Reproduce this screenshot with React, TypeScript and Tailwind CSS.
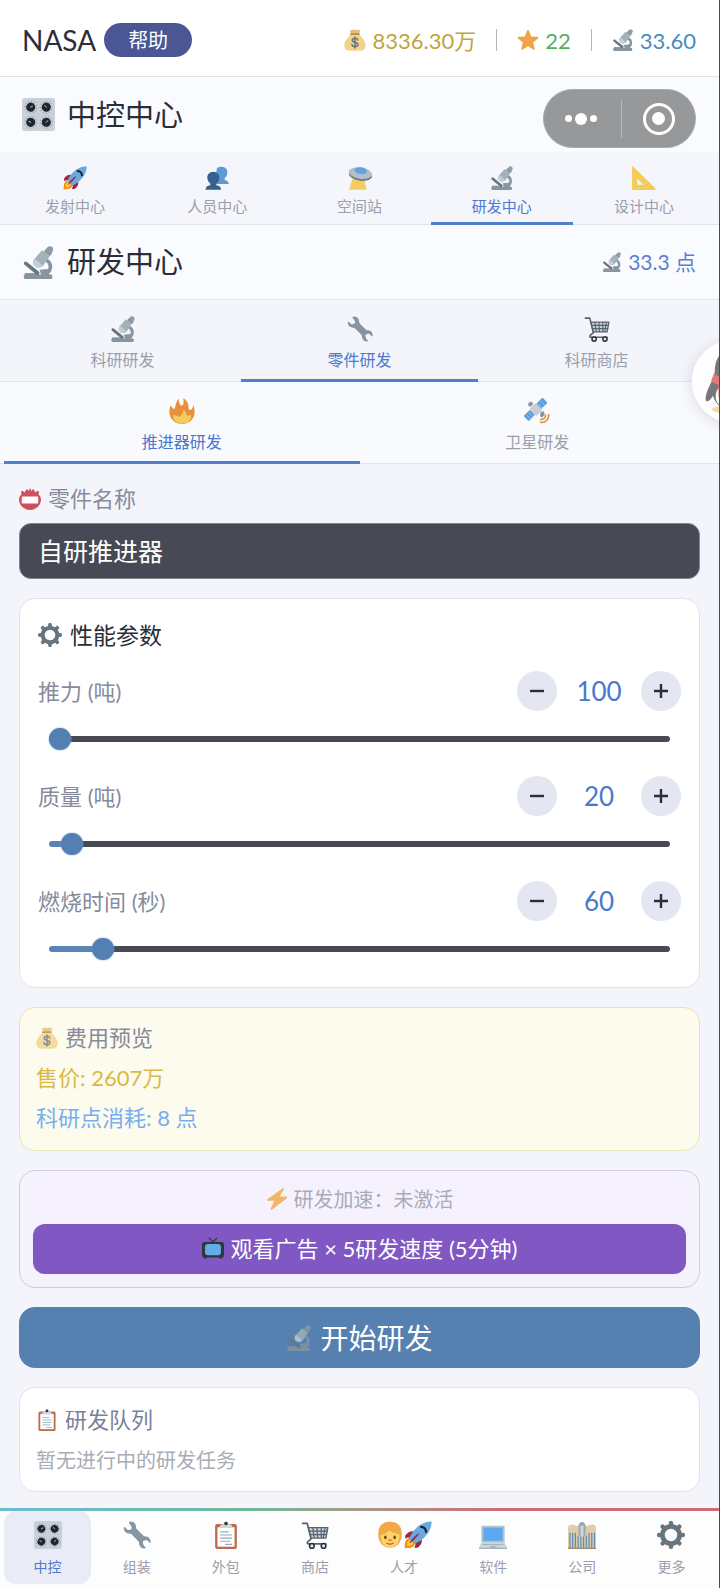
import { useState } from 'react';
import type { CSSProperties, ReactNode } from 'react';
import clsx from 'clsx';

type IconProps = { className?: string };

const Svg = ({ className, children }: { className?: string; children: ReactNode }) => (
  <svg viewBox="0 0 36 36" className={clsx('shrink-0', className)} aria-hidden="true">
    {children}
  </svg>
);

const MoneyBag = ({ className }: IconProps) => (
  <Svg className={className}>
    <path fill="#f3d38a" d="M11 9h14c3 4 10.500 10 10.500 18 0 6-4 8.500-9 8.500h-17c-5 0-9-2.500-9-8.500C.5 19 8 13 11 9z" />
    <path fill="#e2bd74" d="M9 1l3.500 1.500L15.500.5 18 2.500l2.500-2 3 2L27 1l-2.500 7h-13z" />
    <rect x="10" y="7" width="16" height="3" rx="1.500" fill="#b98a4c" />
    <path fill="none" stroke="#67757f" strokeWidth="2.400" strokeLinecap="round" d="M22.500 18c-.5-2-2-2.800-4.500-2.800-2.800 0-4.500 1.300-4.500 3.300 0 4.800 9.300 2.200 9.300 7 0 2-1.900 3.400-4.800 3.400-2.700 0-4.600-1.200-5-3.400M18 13v18" />
  </Svg>
);

const Star = ({ className }: IconProps) => (
  <Svg className={className}>
    <path fill="#f0a449" d="M18 1.500c.8 0 1.400.5 1.700 1.200l3.600 9.400 10 .5c1.700.1 2.300 2 1 3.100l-7.900 6.300 2.700 9.800c.4 1.600-1.200 2.800-2.600 1.900L18 28.300l-8.500 5.400c-1.400.9-3-.3-2.600-1.900l2.700-9.800-7.900-6.300c-1.300-1.100-.7-3 1-3.100l10-.5 3.600-9.400c.3-.7.900-1.200 1.700-1.200z" />
  </Svg>
);

const Microscope = ({ className }: IconProps) => (
  <Svg className={className}>
    <path fill="none" stroke="#8795a0" strokeWidth="4" d="M26 15c7 4 6.500 12-1 16.500" />
    <path fill="#8795a0" d="M19 26l9-1 2 7h-9z" />
    <rect x="2" y="31" width="31" height="5" rx="1.500" fill="#8795a0" />
    <path fill="#8795a0" d="M3 29.500h15V32H3z" />
    <path stroke="#66757f" strokeWidth="4" strokeLinecap="round" d="M4 19l13 10.500" />
    <path fill="#a3b1bb" d="M22 4.500l8.500 6L23 21.500c-3 3-7.500 2.500-9.500 0-2-2.300-2-6 .5-8z" />
    <path fill="#c3ced6" d="M14 13.500l8.500 8c-3 2.500-7 2-9 0-2-2.200-1.800-5.800.5-8z" />
    <path fill="#8795a0" d="M26.500 2.500L33 7.500l-2.500 3.500-6.500-5z" />
    <circle cx="30.500" cy="3.800" r="3.500" fill="#909da8" />
  </Svg>
);

const Knob = ({ x, y, turn }: { x: number; y: number; turn: number }) => (
  <g transform={`rotate(${turn} ${x} ${y})`}>
    <circle cx={x} cy={y} r="6.500" fill="none" stroke="#8795a0" strokeWidth="1.200" strokeDasharray="1 2.400" />
    <circle cx={x} cy={y} r="5" fill="#20262d" />
    <path stroke="#ccd6dd" strokeWidth="1" strokeLinecap="round" d={`M${x} ${y}v-2.200`} />
  </g>
);

const ControlKnobs = ({ className }: IconProps) => (
  <Svg className={className}>
    <rect width="36" height="36" rx="3" fill="#c9d0d8" />
    <Knob x={9.5} y={10} turn={60} />
    <Knob x={26.5} y={10} turn={-40} />
    <Knob x={9.5} y={26.500} turn={-60} />
    <Knob x={26.5} y={26.500} turn={40} />
  </Svg>
);

const Rocket = ({ className }: IconProps) => (
  <Svg className={className}>
    <path fill="#a0263e" d="M2 18c4-5 8-6 13-4l-6 8c-3-1-5-1-7 1-.6-2-.6-3.500 0-5zM18 34c5-4 6-8 4-13l-8 6c1 3 1 5-1 7 2 .6 3.500.6 5 0z" />
    <path fill="#f4900c" d="M1 35c0-8 1-12 6-13 4 0 7 3 7 7-1 5-5 6-13 6z" />
    <path fill="#ffcc4d" d="M4 32c0-5 1-7 4-7.500 2 0 3.500 1.500 3.500 3.500C11 31 9 32 4 32z" />
    <path fill="#6aa9e0" d="M35.500.5c0 9-4.500 17-12 23-3 2.500-7 4.800-10 5.500L7 22.500c.7-3 3-7 5.500-10C18.500 5 26.500.5 35.500.5z" />
    <path fill="#a0263e" d="M7 29c1-4 7-11 13-14-3 6-10 12-13 14z" />
    <path fill="none" stroke="#20262d" strokeWidth="3" strokeLinecap="round" d="M22 7.500c3.500.2 6 2.700 6.500 6.500" />
  </Svg>
);

const People = ({ className }: IconProps) => (
  <Svg className={className}>
    <path fill="#5b9bd8" d="M25 1c6 0 9 4.500 8.500 9.500-.4 4-2 6-4 7.500v3c4 .5 6 2.500 6 6H14l4-24c2-1.400 4.500-2 7-2z" />
    <path fill="#34618e" d="M12.500 8.500c6 0 9.500 4.500 9 9.500-.4 4-2 6.500-4.500 8v3c4.500.5 7 2.500 7 6.500H1c0-4 2.500-6 7-6.500v-3c-2.500-1.500-4.100-4-4.500-8-.5-5 3-9.500 9-9.500z" />
  </Svg>
);

const Ufo = ({ className }: IconProps) => (
  <Svg className={className}>
    <path fill="#f3cc62" d="M7 18h17l4 17.500H1.500z" />
    <ellipse cx="18.500" cy="13.500" rx="17.500" ry="8.500" fill="#6f7f8c" transform="rotate(8 18 14)" />
    <ellipse cx="18.500" cy="10.500" rx="17.500" ry="8.500" fill="#b3bfc9" transform="rotate(8 18 11)" />
    <ellipse cx="19" cy="7" rx="9.500" ry="5" fill="#5fa4e2" transform="rotate(8 19 8)" />
  </Svg>
);

const SetSquare = ({ className }: IconProps) => (
  <Svg className={className}>
    <path fill="#f3cc5c" fillRule="evenodd" d="M0 1.500C0 .3 1 0 2 1l33 32.500c1 1 .5 2.500-1 2.500H2c-1.200 0-2-.8-2-2zM8 19v9h9z" />
    <path fill="none" stroke="#d9ab3e" strokeWidth="1" d="M5 6l-1.500 1.500M9 10l-1.500 1.500M25 26l-1.500 1.500M29 30l-1.500 1.500" />
  </Svg>
);

const Wrench = ({ className }: IconProps) => (
  <Svg className={className}>
    <path
      fill="#8795a0"
      d="M9.500.8c3.800 0 6.700 2 7.200 6.200.2 1.800.3 2.800 1.500 4l7.500 7.400c1.200 1.200 2.200 1.300 3.800 1.500 4 .5 6.300 3.500 6 7.300-.1 1.200-.8 1.400-1.600.6l-2.500-2.600c-.8-.8-1.700-1-2.600-.6l-2.300 1c-1 .5-1.400 1.200-1 2.300l.8 2.600c.2.8.5 1.200 1.200 1.900l1.200 1.200c.8.8.5 1.600-.6 1.700-4 .3-6.900-2-7.300-6.200-.2-1.700-.4-2.500-1.600-3.700l-7.600-7.600c-1.200-1.200-2-1.400-3.800-1.600C3.600 15.700.9 12.600 1 9c.1-1.200.9-1.500 1.700-.7l2.700 2.600c.7.7 1.500 1 2.400.6l2.500-1c.9-.4 1.300-1.100.9-2.100l-1-2.400c-.2-.7-.4-1-1-1.600L8 3.100C7.200 2.200 8 .9 9.500.8z"
    />
  </Svg>
);

const Cart = ({ className }: IconProps) => (
  <Svg className={className}>
    <path fill="none" stroke="#59636d" strokeWidth="2.200" strokeLinecap="round" strokeLinejoin="round" d="M2 3h6l5 20-4 3.500c-1.500 1.500-1 3 1 3h22" />
    <path fill="#c8d0d8" stroke="#59636d" strokeWidth="1.800" strokeLinejoin="round" d="M9.500 8.500h25L32 22H13z" />
    <path fill="none" stroke="#59636d" strokeWidth="1.500" d="M10 13h24M11.500 17.500h22M15 8.500L17 22M20.500 8.500L21.500 22M26 8.500V22M31 8.500L28.500 22" />
    <circle cx="14" cy="32" r="3" fill="#e1e8ed" stroke="#292f33" strokeWidth="2" />
    <circle cx="29" cy="32" r="3" fill="#e1e8ed" stroke="#292f33" strokeWidth="2" />
  </Svg>
);

const Fire = ({ className }: IconProps) => (
  <Svg className={className}>
    <path
      fill="#e8913a"
      d="M18 36C8 36 .5 28.500.5 19c0-4 1-7 2.500-9 .8 3 2.500 5.500 4.500 5C9.500 13 8.500 6 13.500 1c0 4 1 6 2 8.500 1.500 2 4 1 4.500-2C20.300 5 20.500 3 19.500.3 25 3 27.500 8 27 13c.5 3 1.500 4 3 3.500 2-1 3-3 3.500-6.500 1.300 2.500 2 5.500 2 9C35.500 28.500 28 36 18 36z"
    />
    <path
      fill="#f5cb5e"
      d="M29 23c-1.400 2.500-4.500 2-4.800-.5-.3-3-1.500-4.500-4.500-6 .5 4-2.500 5.500-3.700 8-1 2-3.400 1.700-4-.5-1 1.500-3.200 1-4.500-2C6 24 5.500 26 6 28.500 8 33 12.500 35.500 18 35.500S28.500 33 30.500 28c.4-2 0-3.500-1.500-5z"
    />
  </Svg>
);

const Satellite = ({ className }: IconProps) => (
  <Svg className={className}>
    <path stroke="#99aab5" strokeWidth="2.500" d="M8 27L30 6" />
    <rect x="18" y="2.500" width="13" height="10" rx="2" fill="#5b9fe0" transform="rotate(-45 24.500 7.500)" />
    <rect x="1" y="19" width="13" height="10" rx="2" fill="#5b9fe0" transform="rotate(-45 7.500 24)" />
    <path stroke="#bcd8f2" strokeWidth=".8" d="M20 8l6.500 6.500M22.500 4l8 8M3 23l7 7M6.500 20l7.500 7.500" />
    <rect x="9.500" y="9.500" width="14" height="13" rx="3" fill="#c5ced6" transform="rotate(45 16.500 16)" />
    <path fill="#8795a0" d="M6 7l4-2 3 3-4 4-3-1zM23 20l4-2 2 5-4 4-3-2z" />
    <path fill="none" stroke="#d99b4a" strokeWidth="2.400" strokeLinecap="round" d="M23 33.500c6 1.500 12-4 11-10.500M23.500 29.500c3.500.5 6.500-2 6.500-5.500" />
  </Svg>
);

const NameBadge = ({ className }: IconProps) => (
  <Svg className={className}>
    <path fill="#cf4f5e" d="M32 10.500c.6-2.300.7-5 0-6-2 .2-4 1.500-5.500 3C26 5 24.500 2.500 23 2c-1.500.5-2.300 2-2.800 3.500C19.600 3.500 19 1.500 18 .5c-1 1-1.600 3-2.200 5C15.300 4 14.500 2.500 13 2c-1.500.5-3 3-3.500 5.500C8 6 6 4.700 4 4.500c-.7 1-.6 3.700 0 6-2.500 2-4 5-4 8.500C0 28 8 36 18 36s18-8 18-17c0-3.500-1.500-6.500-4-8.500z" />
    <rect x="4.500" y="14" width="27" height="11.500" rx="1.500" fill="#fff" />
  </Svg>
);

const gearAngles = [0, 45, 90, 135, 180, 225, 270, 315];

const Gear = ({ className }: IconProps) => (
  <Svg className={className}>
    <circle cx="18" cy="18" r="11" fill="none" stroke="#66757f" strokeWidth="6" />
    {gearAngles.map((a) => (
      <path key={a} fill="#66757f" transform={`rotate(${a} 18 18)`} d="M14.800 7l.7-5.500C15.700.5 16.500 0 18 0s2.300.5 2.500 1.500l.7 5.500z" />
    ))}
  </Svg>
);

const Bolt = ({ className }: IconProps) => (
  <Svg className={className}>
    <path fill="#eeb765" d="M34.500 15c-.2-.6-.7-1-1.300-1H22.500L29.400 2.200c.6-1.300-.8-2.600-2-1.800L2.300 18.500C1.200 19.500 1.800 21 3 21h10.500L7.600 33.800c-.6 1.300.8 2.600 2 1.800l24.500-19c.4-.4.600-1 .4-1.600z" />
  </Svg>
);

const Tv = ({ className }: IconProps) => (
  <Svg className={className}>
    <path fill="none" stroke="#31373d" strokeWidth="2" strokeLinecap="round" d="M12 2l6 6 6-6" />
    <path fill="#31373d" d="M4 8c-2.500 0-4 1.500-4 4v17c0 2.500 1 4 2.500 4.500L3 35h4l1-1.500h20L29 35h4l.5-1.500C35 33 36 31.500 36 29V12c0-2.500-1.500-4-4-4z" />
    <rect x="5" y="11.500" width="26" height="18.500" rx="5" fill="#63aceb" />
  </Svg>
);

const Clipboard = ({ className }: IconProps) => (
  <Svg className={className}>
    <rect x="4" y="4" width="28" height="32" rx="2.500" fill="#c1694f" />
    <path fill="#fff" d="M7 8h22v25H7z" />
    <path fill="#ccd6dd" d="M10 9V7c0-2 3-2.500 4.500-3C15 1.800 16.300.5 18 .5S21 1.800 21.500 4C23 4.500 26 5 26 7v2z" />
    <circle cx="18" cy="3.200" r="2.300" fill="#31373d" />
    <path stroke="#8fabbb" strokeWidth="1.400" d="M10.500 14h11M10.500 18h15M10.500 22h15M10.500 26h13M17 30h9" />
  </Svg>
);

const Person = ({ className }: IconProps) => (
  <Svg className={className}>
    <path fill="#f0a944" d="M18 1C7 1 2 8 3 19c.5 9 7 15.500 15 15.500S32.500 28 33 19C34 8 29 1 18 1z" />
    <path fill="#fcd36b" d="M6 18c5-1 9-3 11-6 4 3 8 4 13 5v3c0 8-5 14-12 14S6 28 6 20z" />
    <ellipse cx="12" cy="21" rx="1.600" ry="2.400" fill="#664500" />
    <ellipse cx="24" cy="21" rx="1.600" ry="2.400" fill="#664500" />
    <path fill="none" stroke="#b5552f" strokeWidth="1.600" strokeLinecap="round" d="M16.500 24.500h3M14 28.500c2.500 1.500 5.500 1.500 8 0" />
  </Svg>
);

const Laptop = ({ className }: IconProps) => (
  <Svg className={className}>
    <rect x="3" y="6" width="30" height="22" rx="1.500" fill="#b6c2cc" />
    <path fill="#5da9f0" d="M5.500 8.500h25v17h-25z" />
    <path fill="#ccd6dd" d="M3 28h30l3 5.500v1c0 .8-.7 1.500-1.500 1.500h-33C.7 36 0 35.300 0 34.500v-1z" />
    <path fill="#a5b1bc" d="M5 29.500h26l1 1.500H4zM14 32h8l.5 2h-9zM0 34.500h36c0 .9-.6 1.500-1.200 1.500H1.200C.6 36 0 35.400 0 34.500z" />
  </Svg>
);

const Building = ({ className }: IconProps) => (
  <Svg className={className}>
    <path fill="#e0cdaa" d="M0 9c0-3 2-4.500 5-4.500S10 6 11 6h14c1 0 3-1.500 6-1.500s5 1.500 5 4.500v27H0z" />
    <path fill="#99a6b1" d="M13.500 7c0-7.500 9-7.500 9 0v12h-9z" />
    <path fill="#ccd6dd" d="M16 6h4v13h-4z" />
    <path stroke="#5b8fb5" strokeWidth="1.600" d="M2.500 15v19M6 15v19M9.500 15v19M13 19v15M16.500 20v14M20 20v14M23.500 19v15M27 15v19M30.500 15v19M34 15v19" />
    <path stroke="#8b7c69" strokeWidth="1.500" d="M0 35h36" />
  </Svg>
);

const Penguin = ({ className }: IconProps) => (
  <svg viewBox="0 0 64 72" className={className} aria-hidden="true">
    <ellipse cx="32" cy="66" rx="24" ry="5" fill="#f3dba6" />
    <path fill="#77777c" d="M32 0C18 0 11 10 11 24c0 9-9 18-10 30 0 5 4 4 8-3 3 10 12 17 23 17s20-7 23-17c4 7 8 8 8 3C62 42 53 33 53 24 53 10 46 0 32 0z" />
    <path fill="#fff" d="M32 36c-13 0-20 7-20 16s9 14 20 14 20-5 20-14-7-16-20-16z" />
    <ellipse cx="25" cy="15" rx="5" ry="7" fill="#fff" />
    <ellipse cx="39" cy="15" rx="5" ry="7" fill="#fff" />
    <ellipse cx="32" cy="26" rx="14" ry="4" fill="#efb04c" />
    <path fill="#e4777b" d="M10 27c12 8 32 8 44 0l3 8c-9 6-22 8-33 7v10h-9V39c-3-1-6-2-8-4z" />
  </svg>
);

const mainTabs = [
  { label: '发射中心', Icon: Rocket },
  { label: '人员中心', Icon: People },
  { label: '空间站', Icon: Ufo },
  { label: '研发中心', Icon: Microscope },
  { label: '设计中心', Icon: SetSquare },
];

const researchTabs = [
  { label: '科研研发', Icon: Microscope },
  { label: '零件研发', Icon: Wrench },
  { label: '科研商店', Icon: Cart },
];

const partTabs = [
  { label: '推进器研发', Icon: Fire },
  { label: '卫星研发', Icon: Satellite },
];

const bottomTabs = [
  { label: '中控', icons: [ControlKnobs] },
  { label: '组装', icons: [Wrench] },
  { label: '外包', icons: [Clipboard] },
  { label: '商店', icons: [Cart] },
  { label: '人才', icons: [Person, Rocket] },
  { label: '软件', icons: [Laptop] },
  { label: '公司', icons: [Building] },
  { label: '更多', icons: [Gear] },
];

type Tab = { label: string; Icon: (props: IconProps) => ReactNode };

const TabBar = ({ tabs, initial, compact, className }: { tabs: Tab[]; initial: number; compact?: boolean; className: string }) => {
  const [active, setActive] = useState(initial);

  return (
    <nav className={clsx('flex px-1 shadow-[inset_0_-1px_0_#e0e4ee]', className)}>
      {tabs.map(({ label, Icon }, i) => (
        <button
          key={label}
          type="button"
          onClick={() => setActive(i)}
          className={clsx(
            'flex flex-1 flex-col items-center border-b-[3px]',
            compact ? 'gap-1.5 pt-3.5 pb-1.5 text-[15px]/5' : 'gap-2 pt-4 pb-[9px] text-[16px]/5',
            i === active ? 'border-[#4f7fcf] text-[#4a78cc]' : 'border-transparent text-[#9b9eab]'
          )}
        >
          <Icon className={compact ? 'size-6' : 'size-[26px]'} />
          {label}
        </button>
      ))}
    </nav>
  );
};

type ParamProps = { id: string; label: string; min: number; max: number; initial: number };

const ParamSlider = ({ id, label, min, max, initial }: ParamProps) => {
  const [value, setValue] = useState(initial);
  const ratio = (value - min) / (max - min);
  const fill = { '--fill': `${ratio * 100}%` } as CSSProperties;
  const stepClass =
    'flex size-10 items-center justify-center rounded-full bg-[#e4e6f2] text-[#2b2d38]';

  return (
    <div className="flex flex-col gap-[17px]">
      <div className="flex items-center justify-between">
        <label htmlFor={id} className="text-[22px] text-[#868b9c]">{label}</label>
        <div className="flex items-center">
          <button type="button" aria-label={`减少${label}`} className={stepClass} onClick={() => setValue(Math.max(min, value - 1))}>
            <svg viewBox="0 0 14 14" className="size-3.5" stroke="currentColor" strokeWidth="2.400"><path d="M0 7h14" /></svg>
          </button>
          <output htmlFor={id} className="w-[84px] text-center text-[26px] leading-10 text-[#4a78cc]">{value}</output>
          <button type="button" aria-label={`增加${label}`} className={stepClass} onClick={() => setValue(Math.min(max, value + 1))}>
            <svg viewBox="0 0 14 14" className="size-3.5" stroke="currentColor" strokeWidth="2.400"><path d="M0 7h14M7 0v14" /></svg>
          </button>
        </div>
      </div>
      <div className="flex px-[11px]">
        <input
          id={id}
          type="range"
          min={min}
          max={max}
          value={value}
          onChange={(e) => setValue(Number(e.target.value))}
          style={fill}
          className="h-[22px] w-full appearance-none bg-transparent [&::-webkit-slider-runnable-track]:h-1.5 [&::-webkit-slider-runnable-track]:rounded-full [&::-webkit-slider-runnable-track]:bg-[linear-gradient(to_right,#5a84b6_var(--fill),#474955_var(--fill))] [&::-webkit-slider-thumb]:-mt-2 [&::-webkit-slider-thumb]:size-[22px] [&::-webkit-slider-thumb]:appearance-none [&::-webkit-slider-thumb]:rounded-full [&::-webkit-slider-thumb]:bg-[#547fb2] [&::-webkit-slider-thumb]:shadow-[0_0_2px_#7ea3cf]"
        />
      </div>
    </div>
  );
};

const App = () => {
  const [partName, setPartName] = useState('自研推进器');
  const [activeNav, setActiveNav] = useState(0);

  return (
    <div className="relative flex min-h-screen flex-col overflow-hidden border-r border-[#4a4a55] bg-[#f4f5fa] font-['Lato','Noto_Sans_CJK_SC',sans-serif] text-[#2b2d38]">
      {/* Status bar */}
      <header className="flex items-center justify-between border-b border-[#dfe1e8] bg-white pt-1 pr-[23px] pl-[22px]">
        <div className="flex h-[72px] items-center gap-2">
          <h1 className="text-[28px]">NASA</h1>
          <button type="button" className="h-[34px] w-[88px] rounded-full bg-[#4a5794] text-[20px] leading-8 text-white">帮助</button>
        </div>
        <div className="flex items-center gap-5 text-[22px]">
          <span className="flex items-center gap-1.5 text-[#bfa53c]">
            <MoneyBag className="size-[22px]" />
            8336.30万
          </span>
          <span className="h-[22px] w-px bg-[#b4b6bf]" />
          <span className="flex items-center gap-1.5 text-[#54ae62]">
            <Star className="size-[22px]" />
            22
          </span>
          <span className="h-[22px] w-px bg-[#b4b6bf]" />
          <span className="flex items-center gap-1.5 text-[#4a8bbd]">
            <Microscope className="size-[22px]" />
            33.60
          </span>
        </div>
      </header>

      {/* Control center */}
      <div className="flex h-[75px] items-center gap-3 bg-[#fafbff] px-[22px]">
        <ControlKnobs className="size-[33px]" />
        <h2 className="text-[29px]">中控中心</h2>
      </div>
      <TabBar tabs={mainTabs} initial={3} compact className="bg-[#f5f6fb]" />

      {/* Mini program capsule */}
      <div className="absolute top-[89px] right-[23px] flex h-[59px] w-[153px] items-center rounded-full border border-[#a9aaac] bg-[#979899]">
        <button type="button" aria-label="菜单" className="flex flex-1 items-center justify-center gap-[3px] pr-1">
          <span className="size-[7px] rounded-full bg-white" />
          <span className="size-3 rounded-full bg-white" />
          <span className="size-[7px] rounded-full bg-white" />
        </button>
        <span className="h-[38px] w-px bg-[#b9babb]" />
        <button type="button" aria-label="关闭" className="flex flex-1 items-center justify-center">
          <span className="flex size-8 items-center justify-center rounded-full border-[3px] border-white">
            <span className="size-[13px] rounded-full bg-white" />
          </span>
        </button>
      </div>

      {/* Research center */}
      <div className="flex h-[75px] items-center justify-between border-b border-[#e3e5ee] bg-[#fafbff] pr-[23px] pl-[22px]">
        <h2 className="flex items-center gap-3 text-[29px]">
          <Microscope className="size-[33px]" />
          研发中心
        </h2>
        <span className="flex items-center gap-1.5 text-[21px] text-[#5a80d0]">
          <Microscope className="size-5" />
          33.3 点
        </span>
      </div>
      <TabBar tabs={researchTabs} initial={1} className="bg-[#f4f5fb]" />
      <TabBar tabs={partTabs} initial={0} className="bg-[#f9fafd]" />

      <main className="flex flex-1 flex-col gap-[19px] px-[19px] pt-[19px] pb-[15px]">
        <div className="flex flex-col gap-2">
          <label htmlFor="part-name" className="flex items-center gap-[7px] text-[22px] leading-8 text-[#868b9c]">
            <NameBadge className="size-[22px]" />
            零件名称
          </label>
          <input
            id="part-name"
            type="text"
            value={partName}
            onChange={(e) => setPartName(e.target.value)}
            className="h-14 w-full rounded-xl border border-[#85858f] bg-[#474955] px-[18px] pb-0.5 text-[25px] text-white"
          />
        </div>

        <section className="flex flex-col gap-[18px] rounded-2xl border border-[#e2e3ec] bg-white px-[18px] pt-[18px] pb-[27px]">
          <h3 className="flex items-center gap-2 text-[23px] leading-9">
            <Gear className="size-6" />
            性能参数
          </h3>
          <div className="flex flex-col gap-[26px]">
            <ParamSlider id="thrust" label="推力 (吨)" min={100} max={5000} initial={100} />
            <ParamSlider id="mass" label="质量 (吨)" min={10} max={500} initial={20} />
            <ParamSlider id="burn-time" label="燃烧时间 (秒)" min={10} max={700} initial={60} />
          </div>
        </section>

        <section className="rounded-2xl border border-[#ebe3b4] bg-[#fdfbed] px-4 pt-2.5 pb-3 text-[22px] leading-10">
          <h3 className="flex items-center gap-[7px] text-[#868b9c]">
            <MoneyBag className="size-[22px] opacity-80" />
            费用预览
          </h3>
          <p className="text-[#dab848]">售价: 2607万</p>
          <p className="text-[#76aef0]">科研点消耗: 8 点</p>
        </section>

        <section className="flex flex-col gap-2.5 rounded-2xl border border-[#d3c8e6] bg-[#f6f2fd] p-[13px]">
          <p className="flex items-center justify-center gap-1.5 text-[20px] leading-[30px] text-[#a9abb8]">
            <Bolt className="size-[22px]" />
            研发加速：未激活
          </p>
          <button type="button" className="flex h-[50px] items-center justify-center gap-[7px] rounded-xl bg-[#8157c4] pb-0.5 text-[22px] text-white">
            <Tv className="size-[22px]" />
            观看广告 × 5研发速度 (5分钟)
          </button>
        </section>

        <button type="button" className="flex h-[61px] items-center justify-center gap-2 rounded-2xl bg-[#5680b0] text-[28px] text-white">
          <Microscope className="size-[26px] opacity-80" />
          开始研发
        </button>

        <section className="rounded-2xl border border-[#e2e3ec] bg-white px-4 pt-3 pb-[11px]">
          <h3 className="flex items-center gap-[7px] text-[22px] leading-10 text-[#7b8099]">
            <Clipboard className="size-[22px]" />
            研发队列
          </h3>
          <p className="text-[20px] leading-10 text-[#a9abb5]">暂无进行中的研发任务</p>
        </section>
      </main>

      {/* Bottom navigation */}
      <div className="h-[3px] bg-linear-to-r from-[#6cbdd2] via-[#6fb797] via-35% to-[#cc6b79] to-70%" />
      <nav className="flex gap-0.5 bg-[#fdfdfe] px-1 pb-1">
        {bottomTabs.map(({ label, icons }, i) => (
          <button
            key={label}
            type="button"
            onClick={() => setActiveNav(i)}
            className={clsx(
              'flex flex-1 flex-col items-center gap-2 rounded-xl pt-2.5 pb-[7px] text-[14px]/5',
              i === activeNav ? 'bg-[#e9ecf6] text-[#5077cc]' : 'text-[#9b9eab]'
            )}
          >
            <span className="flex">
              {icons.map((Icon, n) => (
                <Icon key={n} className="size-7" />
              ))}
            </span>
            {label}
          </button>
        ))}
      </nav>

      {/* Floating assistant, tucked past the right edge */}
      <button
        type="button"
        aria-label="客服"
        className="absolute top-[340px] -right-14 flex size-[83px] items-center justify-center rounded-full border-4 border-white bg-white/80 shadow-[0_2px_14px_rgba(60,60,90,0.18)]"
      >
        <Penguin className="h-[66px] w-[60px]" />
      </button>
    </div>
  );
};

export default App;
